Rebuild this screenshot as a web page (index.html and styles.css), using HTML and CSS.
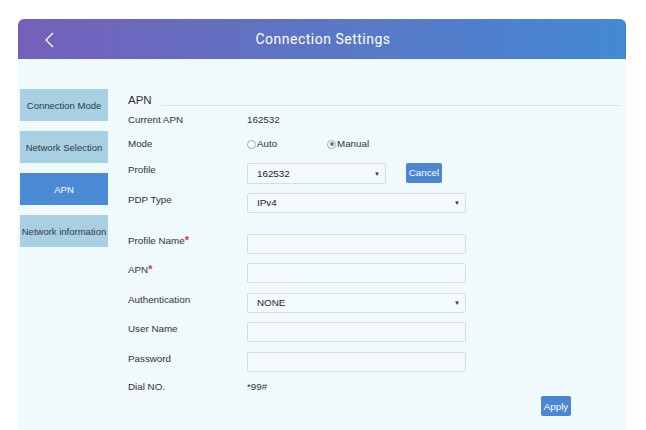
FILE: index.html
```html
<!DOCTYPE html>
<html>
<head>
<meta charset="utf-8">
<link rel="stylesheet" href="styles.css">
</head>
<body>
<div class="card">
  <div class="header">
    <svg class="back" width="12" height="18" viewBox="0 0 12 18"><polyline points="9,1 2,8 9,15" fill="none" stroke="#fff" stroke-width="1.3"/></svg>
    <div class="title">Connection Settings</div>
  </div>
  <div class="body">
    <div class="sidebar">
      <div class="tab">Connection Mode</div>
      <div class="tab">Network Selection</div>
      <div class="tab active">APN</div>
      <div class="tab">Network information</div>
    </div>
    <div class="content">
      <div class="legend"><span class="legend-title">APN</span><span class="legend-line"></span></div>
      <div class="row r-current"><span class="label">Current APN</span><span class="value">162532</span></div>
      <div class="row r-mode"><span class="label">Mode</span>
        <span class="radios">
          <span class="radio"><span class="circle"></span>Auto</span>
          <span class="radio"><span class="circle checked"></span>Manual</span>
        </span>
      </div>
      <div class="row r-profile"><span class="label lab-field">Profile</span>
        <div class="field select short"><span>162532</span><span class="arrow">▼</span></div>
        <div class="btn cancel">Cancel</div>
      </div>
      <div class="row r-pdp"><span class="label lab-field">PDP Type</span>
        <div class="field select"><span>IPv4</span><span class="arrow">▼</span></div>
      </div>
      <div class="row r-pname"><span class="label lab-field">Profile Name<span class="req">*</span></span>
        <div class="field"></div>
      </div>
      <div class="row r-std"><span class="label lab-field">APN<span class="req">*</span></span>
        <div class="field"></div>
      </div>
      <div class="row r-auth"><span class="label lab-field">Authentication</span>
        <div class="field select"><span>NONE</span><span class="arrow">▼</span></div>
      </div>
      <div class="row r-std"><span class="label lab-field">User Name</span>
        <div class="field"></div>
      </div>
      <div class="row r-auth"><span class="label lab-field">Password</span>
        <div class="field"></div>
      </div>
      <div class="row r-dial"><span class="label">Dial NO.</span><span class="value">*99#</span></div>
      <div class="apply-row"><div class="btn apply">Apply</div></div>
    </div>
  </div>
</div>
</body>
</html>
```

FILE: styles.css
```css
html, body {
  margin: 0;
  padding: 0;
  background: #ffffff;
  font-family: "Liberation Sans", Arial, sans-serif;
  color: #333;
}
body {
  padding: 19px 20px 0 18px;
  height: 430px;
  box-sizing: border-box;
  overflow: hidden;
}
.card {
  width: 608px;
  height: 420px;
  border-radius: 6px 6px 0 0;
  overflow: hidden;
  background: #f0f9fb;
}
.header {
  height: 40px;
  background: linear-gradient(90deg, #7460b9 0%, #5e74c4 45%, #4489d3 100%);
  display: flex;
  align-items: center;
  justify-content: center;
  position: relative;
}
.back {
  position: absolute;
  left: 26px;
  top: 13px;
}
.title {
  color: #fff;
  font-family: Roboto, "Liberation Sans", sans-serif;
  font-size: 14px;
  letter-spacing: 0.5px;
  margin-top: -1px;
  margin-left: 2px;
}
.body {
  display: flex;
}
.sidebar {
  padding: 30px 0 0 2px;
  width: 88px;
  display: flex;
  flex-direction: column;
  gap: 10px;
}
.tab {
  height: 32px;
  background: #a9d0e2;
  color: #2d3a44;
  font-size: 9.5px;
  display: flex;
  align-items: center;
  justify-content: center;
  white-space: nowrap;
}
.tab.active {
  background: #4b8bd6;
  color: #fff;
}
.content {
  padding: 34px 0 0 20px;
  width: 492px;
  display: flex;
  flex-direction: column;
  font-size: 9.8px;
}
.legend {
  display: flex;
  align-items: flex-end;
  height: 13px;
}
.legend-title {
  font-size: 11.5px;
  color: #333;
  line-height: 12px;
  margin-right: 9px;
}
.legend-line {
  flex: 1;
  border-bottom: 1px solid #dde5e8;
}
.row {
  display: flex;
  align-items: flex-start;
  line-height: 12px;
}
.label {
  width: 119px;
  flex: none;
}
.lab-field {
  padding-top: 1px;
}
.req {
  color: #e0343a;
  font-size: 11px;
  font-weight: bold;
  vertical-align: top;
  position: relative;
  top: -1px;
}
.value {
  color: #333;
}
.r-current { margin-top: 8px; height: 12px; }
.r-mode { margin-top: 12px; height: 12px; }
.r-profile { margin-top: 13px; height: 21px; }
.r-pdp { margin-top: 9px; height: 20px; }
.r-pname { margin-top: 21px; height: 20px; }
.r-std { margin-top: 9px; height: 20px; }
.r-auth { margin-top: 10px; height: 20px; }
.r-dial { margin-top: 9px; height: 12px; }
.radios {
  display: flex;
}
.radio {
  display: flex;
  align-items: center;
  width: 80px;
  color: #333;
}
.circle {
  width: 9px;
  height: 9px;
  border: 1px solid #a3a8ac;
  border-radius: 50%;
  margin-right: 1px;
  background: #fff;
  box-sizing: border-box;
  position: relative;
}
.circle.checked::after {
  content: "";
  position: absolute;
  left: 1.5px;
  top: 1.5px;
  width: 4px;
  height: 4px;
  border-radius: 50%;
  background: #777;
}
.field {
  width: 219px;
  height: 100%;
  box-sizing: border-box;
  border: 1px solid #d6dde1;
  border-radius: 2px;
  background: #f4fafc;
}
.select {
  display: flex;
  align-items: center;
  justify-content: space-between;
  padding: 0 5px 0 9px;
  color: #222;
}
.select.short {
  width: 139px;
}
.arrow {
  font-size: 6px;
  color: #333;
}
.btn {
  background: #4a86d2;
  color: #fff;
  border-radius: 2px;
  display: flex;
  align-items: center;
  justify-content: center;
  font-size: 9.8px;
}
.cancel {
  margin-left: 20px;
  width: 36px;
  height: 20px;
}
.apply-row {
  margin-top: 3px;
  padding-left: 413px;
}
.apply {
  width: 30px;
  height: 20px;
}
```
